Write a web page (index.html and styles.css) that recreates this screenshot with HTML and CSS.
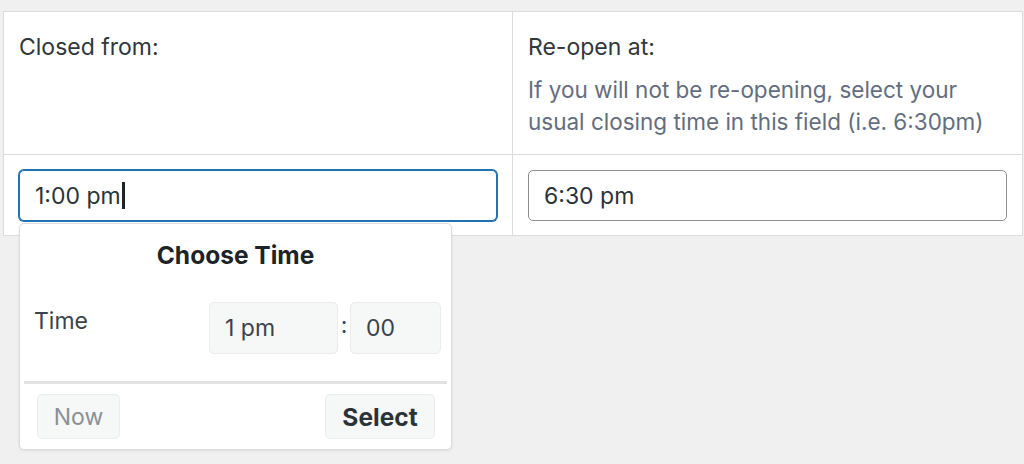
FILE: index.html
```html
<!DOCTYPE html>
<html lang="en">
<head>
  <meta charset="UTF-8" />
  <meta name="viewport" content="width=device-width, initial-scale=1" />
  <title>Temporary closure</title>
  <link rel="stylesheet" href="styles.css">
</head>
<body>

<div class="wrap">
  <div class="hours-grid">
    <div class="cell head-cell">
      <div class="field-label">Closed from:</div>
    </div>
    <div class="cell head-cell">
      <div class="field-label">Re-open at:</div>
      <p class="description">If you will not be re-opening, select your usual closing time in this field (i.e. 6:30pm)</p>
    </div>

    <div class="cell input-cell">
      <div class="picker-anchor">
        <div class="time-field is-focused">1:00 pm<span class="caret"></span></div>

        <div class="picker">
          <div class="picker-title">Choose Time</div>
          <div class="picker-row">
            <span class="picker-label">Time</span>
            <div class="picker-selects">
              <span class="picker-box hour">1 pm</span>
              <span class="picker-colon">:</span>
              <span class="picker-box minute">00</span>
            </div>
          </div>
          <div class="picker-divider"></div>
          <div class="picker-footer">
            <button class="picker-btn now" type="button">Now</button>
            <button class="picker-btn select" type="button">Select</button>
          </div>
        </div>
      </div>
    </div>
    <div class="cell input-cell">
      <div class="time-field">6:30 pm</div>
    </div>
  </div>
</div>

</body>
</html>
```

FILE: styles.css
```css
html {
  height: 100%;
}
body {
  margin: 0;
  min-height: 100%;
  background: #f0f0f1;
  font-family: Inter, "Liberation Sans", sans-serif;
  font-size: 23px;
  color: #2c3338;
}
.wrap {
  padding: 11px 1px 0 3px;
}
.hours-grid {
  display: grid;
  grid-template-columns: 509px 1fr;
  background: #fff;
  border-top: 1px solid #dcdcde;
  border-left: 1px solid #dcdcde;
}
.cell {
  border-right: 1px solid #dcdcde;
  border-bottom: 1px solid #dcdcde;
  min-width: 0;
}
.head-cell {
  height: 143px;
  box-sizing: border-box;
  padding: 19px 15px 15px;
}
.field-label {
  line-height: 32px;
  color: #32373c;
}
.description {
  margin: 11px 0 0;
  font-size: 22.5px;
  line-height: 32px;
  color: #646d7e;
}
.input-cell {
  padding: 15px 15px 14px;
}
.picker-anchor {
  position: relative;
}
.time-field {
  height: 51px;
  box-sizing: border-box;
  border: 1px solid #8c8f94;
  border-radius: 5px;
  padding: 0 15px;
  display: flex;
  align-items: center;
  background: #fff;
  color: #2c3338;
}
.time-field.is-focused {
  border-color: #2271b1;
  box-shadow: 0 0 0 1px #2271b1;
}
.caret {
  width: 3px;
  height: 27px;
  background: #1d2327;
  margin-left: 1px;
}

/* time picker popup */
.picker {
  position: absolute;
  top: calc(100% + 2px);
  left: 0;
  width: 433px;
  box-sizing: border-box;
  background: #fff;
  border: 1px solid #dcdcde;
  border-radius: 5px;
  box-shadow: 0 1px 3px rgba(0, 0, 0, 0.08);
  z-index: 2;
}
.picker-title {
  padding-top: 15px;
  line-height: 32px;
  text-align: center;
  font-size: 24.5px;
  font-weight: bold;
  color: #1d2327;
}
.picker-row {
  margin-top: 31px;
  padding: 0 10px 0 14px;
  display: flex;
  justify-content: space-between;
  align-items: flex-start;
}
.picker-label {
  padding-top: 3px;
  line-height: 32px;
  color: #3c434a;
}
.picker-selects {
  display: flex;
  align-items: center;
}
.picker-box {
  height: 52px;
  box-sizing: border-box;
  display: flex;
  align-items: center;
  padding: 0 15px;
  background: #f6f7f7;
  border: 1px solid #ececec;
  border-radius: 5px;
  color: #3c434a;
}
.picker-box.hour {
  width: 129px;
}
.picker-box.minute {
  width: 91px;
}
.picker-colon {
  width: 12px;
  text-align: center;
  margin-top: -6px;
  color: #3c434a;
}
.picker-divider {
  height: 3px;
  margin: 27px 4px 0;
  background: #e2e2e3;
}
.picker-footer {
  display: flex;
  justify-content: space-between;
  padding: 10px 16px 10px 17px;
}
.picker-btn {
  height: 45px;
  box-sizing: border-box;
  padding: 0 15px;
  font: inherit;
  background: #f6f7f7;
  border: 1px solid #ececec;
  border-radius: 5px;
}
.picker-btn.now {
  width: 83px;
  color: #8c8f94;
}
.picker-btn.select {
  width: 110px;
  font-size: 24.5px;
  font-weight: bold;
  color: #2c3338;
}
```
